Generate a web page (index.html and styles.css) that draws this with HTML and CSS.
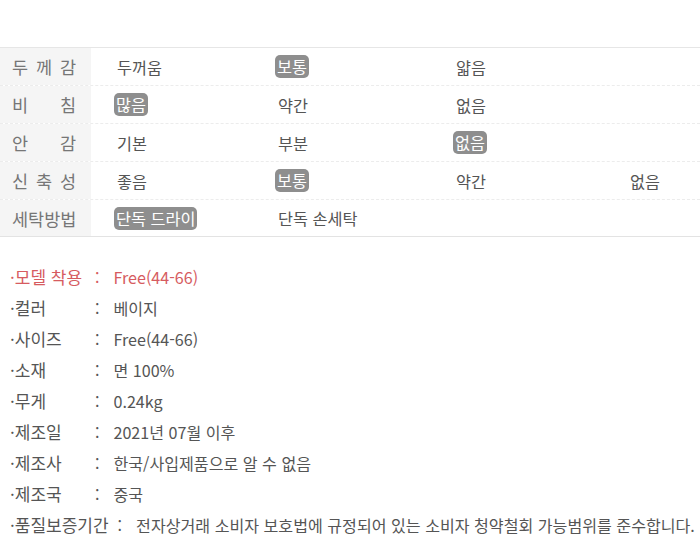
FILE: index.html
```html
<!DOCTYPE html>
<html lang="ko">
<head>
<meta charset="utf-8">
<link rel="stylesheet" href="styles.css">
</head>
<body>
<div class="page">
  <div class="spec">
    <div class="row">
      <div class="label">두 께 감</div>
      <div class="cell c1">두꺼움</div>
      <div class="cell c2"><span class="badge">보통</span></div>
      <div class="cell c3">얇음</div>
      <div class="cell c4"></div>
    </div>
    <div class="row">
      <div class="label">비 침</div>
      <div class="cell c1"><span class="badge">많음</span></div>
      <div class="cell c2">약간</div>
      <div class="cell c3">없음</div>
      <div class="cell c4"></div>
    </div>
    <div class="row">
      <div class="label">안 감</div>
      <div class="cell c1">기본</div>
      <div class="cell c2">부분</div>
      <div class="cell c3"><span class="badge">없음</span></div>
      <div class="cell c4"></div>
    </div>
    <div class="row">
      <div class="label">신 축 성</div>
      <div class="cell c1">좋음</div>
      <div class="cell c2"><span class="badge">보통</span></div>
      <div class="cell c3">약간</div>
      <div class="cell c4">없음</div>
    </div>
    <div class="row last">
      <div class="label">세탁방법</div>
      <div class="cell c1"><span class="badge">단독 드라이</span></div>
      <div class="cell c2">단독 손세탁</div>
      <div class="cell c3"></div>
      <div class="cell c4"></div>
    </div>
  </div>

  <ul class="info">
    <li class="hl"><span class="k">·모델 착용</span><span class="colon">:</span><span class="v">Free(44-66)</span></li>
    <li><span class="k">·컬러</span><span class="colon">:</span><span class="v">베이지</span></li>
    <li><span class="k">·사이즈</span><span class="colon">:</span><span class="v">Free(44-66)</span></li>
    <li><span class="k">·소재</span><span class="colon">:</span><span class="v">면 100%</span></li>
    <li><span class="k">·무게</span><span class="colon">:</span><span class="v">0.24kg</span></li>
    <li><span class="k">·제조일</span><span class="colon">:</span><span class="v">2021년 07월 이후</span></li>
    <li><span class="k">·제조사</span><span class="colon">:</span><span class="v">한국/사입제품으로 알 수 없음</span></li>
    <li><span class="k">·제조국</span><span class="colon">:</span><span class="v">중국</span></li>
    <li><span class="k">·품질보증기간</span><span class="colon">:</span><span class="v">전자상거래 소비자 보호법에 규정되어 있는 소비자 청약철회 가능범위를 준수합니다.</span></li>
  </ul>
</div>
</body>
</html>
```

FILE: styles.css
```css
html, body {
  margin: 0;
  padding: 0;
  background: #ffffff;
}

body {
  font-family: "Noto Sans CJK KR", "Noto Sans", sans-serif;
  color: #555555;
  width: 700px;
  overflow: hidden;
}

.page {
  padding-top: 47px;
}

.spec {
  border-top: 1px solid #e6e6e6;
  border-bottom: 1px solid #e3e3e3;
}

.row {
  display: grid;
  grid-template-columns: 91px 187px 178px 174px 1fr;
  height: 37px;
  border-bottom: 1px dashed #ececec;
}

.row.last {
  border-bottom: none;
  height: 36px;
}

.label {
  background: #f5f5f5;
  color: #767676;
  font-size: 17.5px;
  line-height: 37px;
  padding: 0 15px 0 12px;
  text-align: justify;
  text-align-last: justify;
  white-space: nowrap;
  overflow: hidden;
}

.cell {
  display: flex;
  align-items: center;
  font-size: 16.3px;
  color: #555555;
  white-space: nowrap;
}

.c1 {
  padding-left: 26px;
}

.badge {
  background: #8e8e8e;
  color: #ffffff;
  border-radius: 5px;
  padding: 0 2px;
  margin-left: -3px;
  line-height: 23px;
}

.info {
  list-style: none;
  margin: 24px 0 0 0;
  padding: 0 0 0 10px;
}

.info li {
  display: flex;
  align-items: center;
  height: 31px;
  font-size: 16.1px;
  color: #555555;
  white-space: nowrap;
}

.info li.hl {
  color: #d65b60;
}

.k {
  min-width: 76px;
  font-size: 17px;
}

.colon {
  margin: 0 14px 0 9px;
}
```
